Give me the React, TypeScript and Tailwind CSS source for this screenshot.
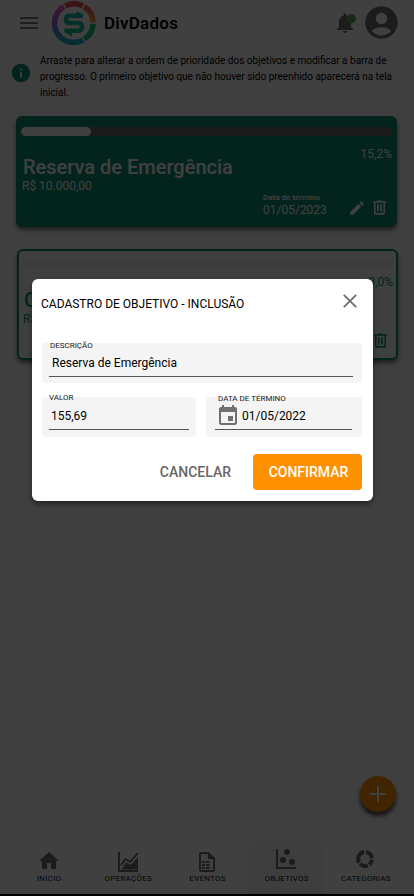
import React from "react";
import { MdNotifications, MdAccountCircle, MdInfo, MdEdit, MdEvent } from "react-icons/md";

function TrashIcon({ className }: { className?: string }) {
  return (
    <svg viewBox="0 0 24 24" fill="currentColor" className={className}>
      <path d="M9,3V4H4V6H5V19A2,2 0 0,0 7,21H17A2,2 0 0,0 19,19V6H20V4H15V3H9M7,6H17V19H7V6M9,8V17H11V8H9M13,8V17H15V8H13Z" />
    </svg>
  );
}

function Logo() {
  return (
    <svg viewBox="0 0 44 44" className="size-11">
      <defs>
        <linearGradient id="purple" x1="0" y1="0" x2="0" y2="1">
          <stop offset="0" stopColor="#ee5fd0" />
          <stop offset="0.45" stopColor="#8a6ae0" />
          <stop offset="1" stopColor="#12b8cc" />
        </linearGradient>
        <linearGradient id="orange" x1="0" y1="0" x2="0" y2="1">
          <stop offset="0" stopColor="#f0605a" />
          <stop offset="1" stopColor="#f0a030" />
        </linearGradient>
        <linearGradient id="dollar" gradientUnits="userSpaceOnUse" x1="0" y1="10" x2="0" y2="35">
          <stop offset="0" stopColor="#12b5cc" />
          <stop offset="1" stopColor="#12c77c" />
        </linearGradient>
      </defs>
      <g fill="none" strokeWidth="5.6">
        <path d="M31.2 38.8 A19.1 19.1 0 1 1 12 5.7" stroke="url(#purple)" />
        <path d="M13.2 5 A19.1 19.1 0 0 1 30.8 5" stroke="#f0525f" />
        <path d="M32 5.7 A19.1 19.1 0 0 1 41.1 21.4" stroke="url(#orange)" />
        <path d="M41.1 22.8 A19.1 19.1 0 0 1 32.4 38" stroke="#16bd79" />
      </g>
      <path d="M31 14.8H17.5Q14 14.8 14 18.4T17.5 22H26.5Q30 22 30 25.8T26.5 29.8H12.5" fill="none" stroke="url(#dollar)" strokeWidth="4.6" />
      <path d="M24.5 10L32 14.5L24.5 17.5ZM20 27L12 31L20 35.5Z" fill="url(#dollar)" />
    </svg>
  );
}

function Header() {
  return (
    <header className="flex h-[49px] items-start bg-white">
      <div className="ml-5 mt-[17px] flex h-3 w-[18px] flex-col justify-between">
        <span className="h-[2px] bg-[#777]" />
        <span className="h-[2px] bg-[#777]" />
        <span className="h-[2px] bg-[#777]" />
      </div>
      <div className="ml-[14px] mt-[1px]">
        <Logo />
      </div>
      <h1 className="ml-2 mt-[13px] text-[17px] leading-5 font-semibold tracking-[0.25px]">DivDados</h1>
      <div className="relative ml-auto mt-[11px]">
        <MdNotifications className="size-6 text-[#707070]" />
        <span className="absolute right-[1px] top-[3px] size-[9px] rounded-full bg-[#56ad5a]" />
      </div>
      <MdAccountCircle className="ml-[5px] mr-[13px] mt-[3px] size-[39px] text-[#707070]" />
    </header>
  );
}

type GoalProps = {
  title: string;
  value: string;
  percent: string;
  date: string;
  outlined?: boolean;
};

function Goal({ title, value, percent, date, outlined }: GoalProps) {
  const box = outlined
    ? "ml-[17px] mt-[22px] border-2 border-[#0a8f70] bg-[#f4fdfb] text-[#0a8f70]"
    : "ml-4 mt-[15px] border-2 border-[#0f8f73] bg-[#0f8f73] text-white";
  return (
    <section className={`flex h-[111px] w-[381px] flex-col rounded-[6px] px-[3px] shadow-[0_3px_4px_rgba(0,0,0,0.5)] ${box}`}>
      <div className={`mt-[9px] h-[9px] w-[371px] shrink-0 overflow-hidden rounded-full ${outlined ? "bg-[#f4f4f4]" : "bg-[#6b6b6b]"}`}>
        {!outlined && <div className="h-full w-[70px] rounded-full bg-white" />}
      </div>
      <div className={`h-[14px] text-right text-[12px] leading-[14px] ${outlined ? "mt-[6px] mb-[-1px]" : "mt-[11px] mb-[-6px]"}`}>{percent}</div>
      <h2 className="pl-[2px] text-[20px] leading-6 font-medium">{title}</h2>
      <div className="pl-px text-[12px] leading-[14px]">{value}</div>
      <div className="mt-[1px] flex justify-end">
        <div className="w-[64px]">
          <div className="text-[8px] leading-[8px] font-medium whitespace-nowrap">Data de término</div>
          <div className="mt-px text-[12px] leading-[14px]">{date}</div>
        </div>
        <MdEdit className="ml-[21px] mt-[5px] size-[18px]" />
        <TrashIcon className="ml-[4px] mr-[3px] mt-[4px] size-[19px]" />
      </div>
    </section>
  );
}

type FieldProps = {
  label: string;
  children: React.ReactNode;
  className: string;
  line: string;
  caption: string;
};

function Field({ label, children, className, line, caption }: FieldProps) {
  return (
    <label className={`flow-root h-10 rounded-[4px] bg-[#f4f4f4] ${className}`}>
      <span className={`block h-[11px] text-[8px] leading-[8px] text-[#222] ${caption}`}>{label}</span>
      <span className={`flex h-[23px] items-center border-b border-[#555] text-[12px] ${line}`}>{children}</span>
    </label>
  );
}

function Dialog() {
  return (
    <div role="dialog" className="absolute left-8 top-[279px] h-[222px] w-[341px] rounded-[6px] bg-white px-[10px] shadow-[0_3px_5px_rgba(0,0,0,0.45)]">
      <div className="flex h-[64px] items-start justify-between">
        <h2 className="mt-[17px] ml-[-1px] text-[12px] leading-4">CADASTRO DE OBJETIVO - INCLUSÃO</h2>
        <svg viewBox="0 0 14 14" className="mr-[6px] mt-[15px] size-[14px]">
          <path d="M.8 .8L13.2 13.2M13.2 .8L.8 13.2" stroke="#707070" strokeWidth="1.9" />
        </svg>
      </div>
      <Field label="DESCRIÇÃO" className="w-[320px] pl-[7px] pr-[9px]" caption="mt-[-1px] mb-px pl-px" line="pl-[3px] pb-[4px]">Reserva de Emergência</Field>
      <div className="mt-[14px] flex gap-[10px]">
        <Field label="VALOR" className="w-[154px] px-[7px]" caption="mt-[-3px] mb-[2px]" line="pl-[2px] pb-[5px]">155,69</Field>
        <Field label="DATA DE TÉRMINO" className="w-[156px] pl-[9px] pr-[10px]" caption="mt-[-2px] mb-[1px] pl-[3px]" line="pl-[1px] pb-[5px]">
          <MdEvent className="mr-[2px] size-6 text-[#707070]" />
          01/05/2022
        </Field>
      </div>
      <div className="mt-[17px] flex justify-end pr-px">
        <button className="mr-[22px] text-[14px] font-medium text-[#666]">CANCELAR</button>
        <button className="h-9 w-[109px] rounded-[4px] bg-[#ff9000] pl-[2px] text-[14px] font-medium text-white">CONFIRMAR</button>
      </div>
    </div>
  );
}

function NavItem({ label, active, icon, children }: { label: string; active?: boolean; icon: string; children: React.ReactNode }) {
  return (
    <div className={`flex w-[74px] flex-col items-center ${active ? "bg-[#f8f8f8]" : ""}`}>
      <div className={`h-[31px] ${icon}`}>
        <svg viewBox="0 0 24 24" fill="currentColor" className="size-6 text-[#707070]">{children}</svg>
      </div>
      <span className="pl-px text-[8px] leading-[10px] tracking-[0.25px] text-[#111]">{label}</span>
    </div>
  );
}

export default function App() {
  return (
    <div className="relative flex h-[896px] w-[414px] flex-col overflow-hidden bg-[#fbfbfb] font-[Roboto,sans-serif] text-black">
      <Header />
      <div className="flex h-[52px] items-start">
        <MdInfo className="ml-[10px] mt-[13px] size-[22px] text-[#0f8f73]" />
        <p className="ml-2 mt-[4px] w-[366px] text-[10px] leading-4">
          Arraste para alterar a ordem de prioridade dos objetivos e modificar a barra de<br />
          progresso. O primeiro objetivo que não houver sido preenhido aparecerá na tela<br />
          inicial.
        </p>
      </div>
      <Goal title="Reserva de Emergência" value="R$ 10.000,00" percent="15,2%" date="01/05/2023" />
      <Goal title="Carro" value="R$ 30.000,00" percent="0,0%" date="01/05/2023" outlined />
      <div className="mt-auto flex justify-end pr-[18px]">
        <button className="flex size-9 items-center justify-center rounded-full bg-[#ff9500] shadow-[0_4px_4px_rgba(0,0,0,0.7)]">
          <svg viewBox="0 0 16 16" className="size-4"><path d="M8 0V16M0 8H16" stroke="white" strokeWidth="2" /></svg>
        </button>
      </div>
      <nav className="mt-[31px] flex h-[51px] shrink-0 justify-center gap-[5.2px] bg-white">
        <NavItem label="INÍCIO" icon="pt-[6px]"><path d="M10,20V14H14V20H19V12H22L12,3L2,12H5V20H10Z" /></NavItem>
        <NavItem label="OPERAÇÕES" icon="pt-[7px]">
          <path d="M2 2H4V20H22V22H2ZM5.5 19.5L10 12.2L14.8 15L22 7V19.5Z" />
          <path d="M5 15.2L9.2 9L14.2 11.8L21.5 3.4" fill="none" stroke="currentColor" strokeWidth="2" />
        </NavItem>
        <NavItem label="EVENTOS" icon="pt-[7px]">
          <path fillRule="evenodd" d="M6 2H14L20 8V20Q20 22 18 22H6Q4 22 4 20V4Q4 2 6 2M6 4V20H18V9H13V4ZM7 11H10V13H7ZM11 11H14.5V13H11ZM7 14H10V16H7ZM11 14H14.5V16H11ZM7 17H10V19H7ZM11 17H14.5V19H11Z" />
        </NavItem>
        <NavItem label="OBJETIVOS" active icon="pt-[4px]"><path d="M2,2H4V20H22V22H2V2M9,10A3,3 0 0,1 12,13A3,3 0 0,1 9,16A3,3 0 0,1 6,13A3,3 0 0,1 9,10M13,2A3,3 0 0,1 16,5A3,3 0 0,1 13,8A3,3 0 0,1 10,5A3,3 0 0,1 13,2M18,12A3,3 0 0,1 21,15A3,3 0 0,1 18,18A3,3 0 0,1 15,15A3,3 0 0,1 18,12Z" /></NavItem>
        <NavItem label="CATEGORIAS" icon="pt-[4px]">
          <path d="M13 5.1A7 7 0 0 1 18.9 11.2M18.9 12.8A7 7 0 0 1 16.2 17.6M14.8 18.4A7 7 0 0 1 7 16.9M6.1 15.7A7 7 0 0 1 11.2 5.1" fill="none" stroke="currentColor" strokeWidth="4" />
        </NavItem>
      </nav>
      <div className="h-[2px] shrink-0 bg-black" />
      <div className="absolute inset-0 bg-black/75" />
      <Dialog />
    </div>
  );
}
